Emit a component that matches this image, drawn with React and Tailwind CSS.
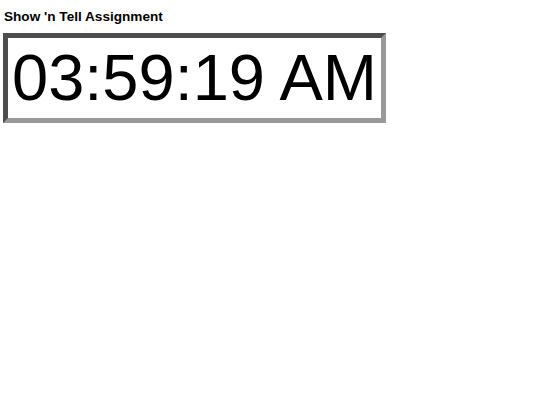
import React, { useState, useEffect } from 'react';

const ShowNTell = () => {
  const [time] = useState('03:59:19 AM');

  useEffect(() => {
    // static clock for the screenshot
  }, []);

  return (
    <div className="min-h-screen bg-white p-[3px] font-['Liberation_Sans',Arial,sans-serif] text-black">
      {/* Heading */}
      <h4 className="mt-[6px] mb-[9px] ml-[1px] text-[13.6px] font-bold leading-[15px]">
        Show 'n Tell Assignment
      </h4>

      {/* Clock */}
      <div className="inline-block border-[5px] border-t-[#4d4d4d] border-l-[#4d4d4d] border-b-[#999999] border-r-[#999999] px-[4px] py-[3px] text-[65px] leading-[74px]">
        {time}
      </div>
    </div>
  );
};

export default ShowNTell;
